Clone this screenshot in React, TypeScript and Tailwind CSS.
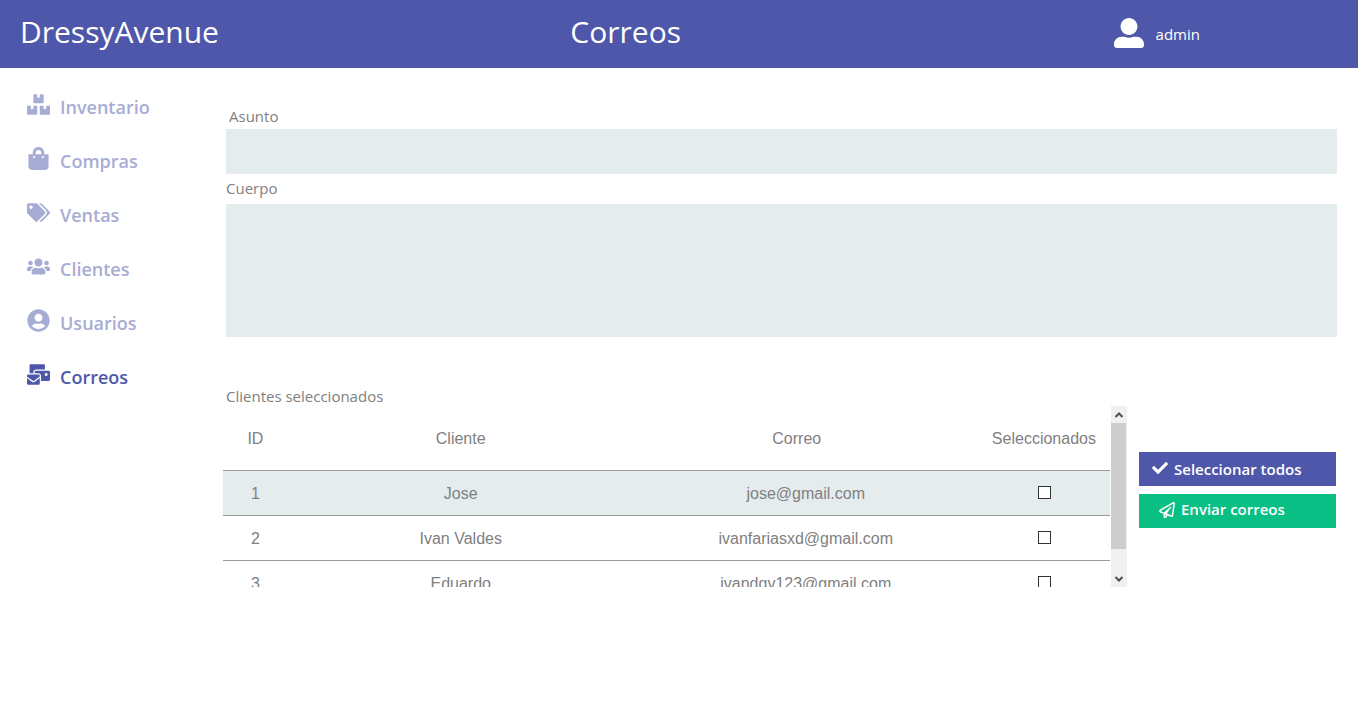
import { useState } from "react";
import {
  FaBoxes,
  FaCheck,
  FaMailBulk,
  FaRegPaperPlane,
  FaShoppingBag,
  FaTags,
  FaUserAlt,
  FaUserCircle,
  FaUsers,
} from "react-icons/fa";

const navItems = [
  { label: "Inventario", Icon: FaBoxes },
  { label: "Compras", Icon: FaShoppingBag },
  { label: "Ventas", Icon: FaTags },
  { label: "Clientes", Icon: FaUsers },
  { label: "Usuarios", Icon: FaUserCircle },
  { label: "Correos", Icon: FaMailBulk },
];

const clients = [
  { id: 1, name: "Jose", email: "jose@gmail.com" },
  { id: 2, name: "Ivan Valdes", email: "ivanfariasxd@gmail.com" },
  { id: 3, name: "Eduardo", email: "ivandgv123@gmail.com" },
];

function Header() {
  return (
    <header className="grid h-17 grid-cols-[42%_40%_18%] items-center bg-[#4e57a9] text-white">
      <a href="#inicio" className="pb-1 pl-5 text-3xl leading-10">
        DressyAvenue
      </a>
      <h1 className="pb-1 text-3xl leading-10">Correos</h1>
      <div className="flex items-center gap-3 text-[15px]">
        <FaUserAlt className="mb-[2px] size-[30px]" />
        <span>admin</span>
      </div>
    </header>
  );
}

function Sidebar() {
  return (
    <nav className="w-[226px] shrink-0 pt-3">
      <ul>
        {navItems.map(({ label, Icon }) => (
          <li key={label}>
            <a
              href={`#${label.toLowerCase()}`}
              className={`flex h-[54px] items-center gap-[10px] pl-[27px] text-lg font-semibold ${
                label === "Correos" ? "text-[#4e57a9]" : "text-[#a7acd4]"
              }`}
            >
              <Icon className="mb-[6px] size-[23px]" />
              {label}
            </a>
          </li>
        ))}
      </ul>
    </nav>
  );
}

function ScrollArrow({ up = false }: { up?: boolean }) {
  return (
    <button
      type="button"
      aria-label={up ? "Subir" : "Bajar"}
      className="flex h-[17px] w-full items-center justify-center pr-px"
    >
      <svg viewBox="0 0 8 6" className="h-[6px] w-2" fill="none" stroke="#505050" strokeWidth="2">
        <path d={up ? "M.5 5 4 1.5 7.5 5" : "M.5 1 4 4.5 7.5 1"} />
      </svg>
    </button>
  );
}

function ClientTable({
  selected,
  onToggle,
}: {
  selected: number[];
  onToggle: (id: number) => void;
}) {
  return (
    <div className="-ml-[3px] flex h-[181px] min-w-0 flex-1">
      <div className="min-w-0 flex-1 overflow-hidden">
        <table
          aria-labelledby="clientes"
          className="w-full table-fixed border-collapse text-center font-['Liberation_Sans',Arial,sans-serif] text-base text-[#808080]"
        >
          <thead>
            <tr className="h-16">
              <th className="w-[7.3%] pt-[2px] font-normal">ID</th>
              <th className="w-[39%] pt-[2px] font-normal">Cliente</th>
              <th className="w-[38.8%] pt-[2px] pr-[18px] font-normal">Correo</th>
              <th className="pt-[2px] font-normal">Seleccionados</th>
            </tr>
          </thead>
          <tbody>
            {clients.map((client) => (
              <tr
                key={client.id}
                className="h-[45px] border-t border-[#9b9b9b] first:bg-[#e4ecee]"
              >
                <td className="pt-[2px]">{client.id}</td>
                <td className="pt-[2px]">{client.name}</td>
                <td className="pt-[2px]">{client.email}</td>
                <td className="pl-[2px]">
                  <input
                    type="checkbox"
                    aria-label={`Seleccionar ${client.name}`}
                    checked={selected.includes(client.id)}
                    onChange={() => onToggle(client.id)}
                    className="mx-auto block size-[13px] appearance-none border border-[#333] bg-white checked:bg-[#4e57a9]"
                  />
                </td>
              </tr>
            ))}
          </tbody>
        </table>
      </div>
      <div className="ml-px flex w-4 flex-col bg-[#f0f0f0]">
        <ScrollArrow up />
        <div className="flex-1">
          <div className="mr-px h-[86%] bg-[#cdcdcd]" />
        </div>
        <ScrollArrow />
      </div>
    </div>
  );
}

export default function App() {
  const [selected, setSelected] = useState<number[]>([]);

  const toggle = (id: number) =>
    setSelected((ids) => (ids.includes(id) ? ids.filter((i) => i !== id) : [...ids, id]));

  return (
    <div className="min-h-screen bg-white font-['Open_Sans','Segoe_UI',sans-serif]">
      <Header />
      <div className="flex">
        <Sidebar />
        <main className="min-w-0 flex-1 pt-9 pr-[21px] text-[15px] text-[#808080]">
          <label htmlFor="asunto" className="block h-[25px] pl-[3px] leading-[25px]">
            Asunto
          </label>
          <input id="asunto" type="text" className="block h-[45px] w-full bg-[#e4ecee] px-3 outline-none" />
          <label htmlFor="cuerpo" className="block h-[30px] leading-7">
            Cuerpo
          </label>
          <textarea
            id="cuerpo"
            className="block h-[133px] w-full resize-none bg-[#e4ecee] p-3 outline-none"
          />
          <h2 id="clientes" className="mt-[50px] leading-[19px]">
            Clientes seleccionados
          </h2>
          <div className="flex items-start gap-3">
            <ClientTable selected={selected} onToggle={toggle} />
            <div className="mt-[46px] mr-px flex w-[197px] flex-col gap-2 font-semibold text-white">
              <button
                type="button"
                onClick={() => setSelected(clients.map((c) => c.id))}
                className="flex h-[34px] items-center gap-[6px] bg-[#4e57a9] pl-[13px]"
              >
                <FaCheck className="mb-[2px] size-4" />
                Seleccionar todos
              </button>
              <button
                type="button"
                className="flex h-[34px] items-center gap-[6px] bg-[#0abf84] pb-[3px] pl-5"
              >
                <FaRegPaperPlane className="size-4" />
                Enviar correos
              </button>
            </div>
          </div>
        </main>
      </div>
    </div>
  );
}
